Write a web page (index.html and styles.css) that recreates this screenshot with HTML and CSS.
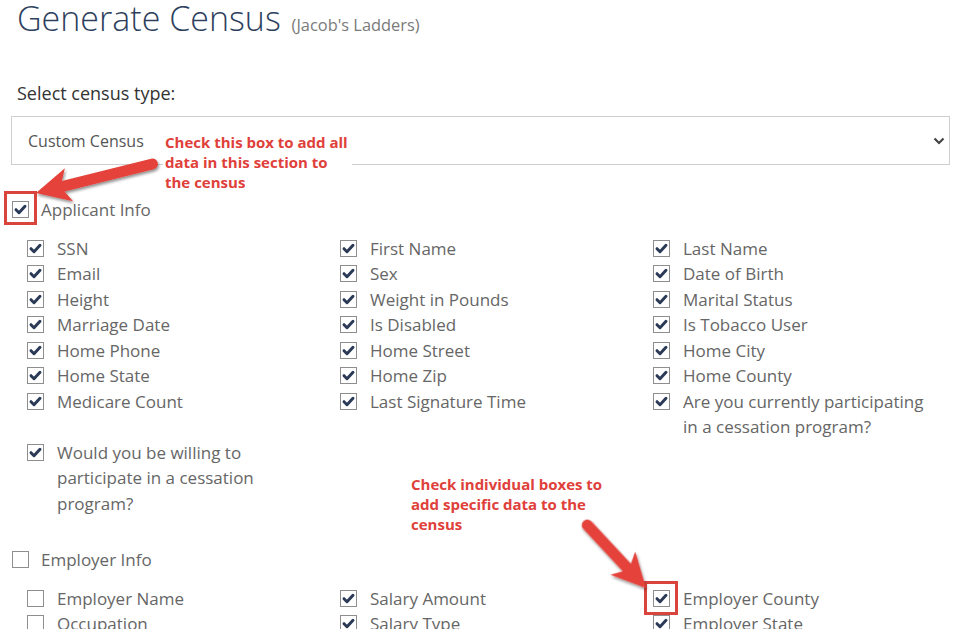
FILE: index.html
```html
<!DOCTYPE html>
<html>
<head>
<meta charset="utf-8">
<link rel="stylesheet" href="styles.css">
</head>
<body>
<div class="page">
  <h1 class="title">Generate Census <small class="subtitle">(Jacob's Ladders)</small></h1>
  <div class="field-label">Select census type:</div>
  <div class="select">
    <span class="select-value">Custom Census</span>
    <svg class="chevron" width="12" height="8" viewBox="0 0 12 8"><path d="M1.5 1.5 L6 6 L10.5 1.5" fill="none" stroke="#444" stroke-width="2.2"/></svg>
  </div>

  <section class="group group-first">
    <label class="section-head"><span class="cb checked"><svg viewBox="0 0 16 16"><path d="M3.2 8.2 L6.4 11.4 L12.8 4.6"/></svg></span>Applicant Info</label>
    <div class="items">
      <label class="item"><span class="cb checked"><svg viewBox="0 0 16 16"><path d="M3.2 8.2 L6.4 11.4 L12.8 4.6"/></svg></span><span class="lbl">SSN</span></label>
      <label class="item"><span class="cb checked"><svg viewBox="0 0 16 16"><path d="M3.2 8.2 L6.4 11.4 L12.8 4.6"/></svg></span><span class="lbl">First Name</span></label>
      <label class="item"><span class="cb checked"><svg viewBox="0 0 16 16"><path d="M3.2 8.2 L6.4 11.4 L12.8 4.6"/></svg></span><span class="lbl">Last Name</span></label>
      <label class="item"><span class="cb checked"><svg viewBox="0 0 16 16"><path d="M3.2 8.2 L6.4 11.4 L12.8 4.6"/></svg></span><span class="lbl">Email</span></label>
      <label class="item"><span class="cb checked"><svg viewBox="0 0 16 16"><path d="M3.2 8.2 L6.4 11.4 L12.8 4.6"/></svg></span><span class="lbl">Sex</span></label>
      <label class="item"><span class="cb checked"><svg viewBox="0 0 16 16"><path d="M3.2 8.2 L6.4 11.4 L12.8 4.6"/></svg></span><span class="lbl">Date of Birth</span></label>
      <label class="item"><span class="cb checked"><svg viewBox="0 0 16 16"><path d="M3.2 8.2 L6.4 11.4 L12.8 4.6"/></svg></span><span class="lbl">Height</span></label>
      <label class="item"><span class="cb checked"><svg viewBox="0 0 16 16"><path d="M3.2 8.2 L6.4 11.4 L12.8 4.6"/></svg></span><span class="lbl">Weight in Pounds</span></label>
      <label class="item"><span class="cb checked"><svg viewBox="0 0 16 16"><path d="M3.2 8.2 L6.4 11.4 L12.8 4.6"/></svg></span><span class="lbl">Marital Status</span></label>
      <label class="item"><span class="cb checked"><svg viewBox="0 0 16 16"><path d="M3.2 8.2 L6.4 11.4 L12.8 4.6"/></svg></span><span class="lbl">Marriage Date</span></label>
      <label class="item"><span class="cb checked"><svg viewBox="0 0 16 16"><path d="M3.2 8.2 L6.4 11.4 L12.8 4.6"/></svg></span><span class="lbl">Is Disabled</span></label>
      <label class="item"><span class="cb checked"><svg viewBox="0 0 16 16"><path d="M3.2 8.2 L6.4 11.4 L12.8 4.6"/></svg></span><span class="lbl">Is Tobacco User</span></label>
      <label class="item"><span class="cb checked"><svg viewBox="0 0 16 16"><path d="M3.2 8.2 L6.4 11.4 L12.8 4.6"/></svg></span><span class="lbl">Home Phone</span></label>
      <label class="item"><span class="cb checked"><svg viewBox="0 0 16 16"><path d="M3.2 8.2 L6.4 11.4 L12.8 4.6"/></svg></span><span class="lbl">Home Street</span></label>
      <label class="item"><span class="cb checked"><svg viewBox="0 0 16 16"><path d="M3.2 8.2 L6.4 11.4 L12.8 4.6"/></svg></span><span class="lbl">Home City</span></label>
      <label class="item"><span class="cb checked"><svg viewBox="0 0 16 16"><path d="M3.2 8.2 L6.4 11.4 L12.8 4.6"/></svg></span><span class="lbl">Home State</span></label>
      <label class="item"><span class="cb checked"><svg viewBox="0 0 16 16"><path d="M3.2 8.2 L6.4 11.4 L12.8 4.6"/></svg></span><span class="lbl">Home Zip</span></label>
      <label class="item"><span class="cb checked"><svg viewBox="0 0 16 16"><path d="M3.2 8.2 L6.4 11.4 L12.8 4.6"/></svg></span><span class="lbl">Home County</span></label>
      <label class="item"><span class="cb checked"><svg viewBox="0 0 16 16"><path d="M3.2 8.2 L6.4 11.4 L12.8 4.6"/></svg></span><span class="lbl">Medicare Count</span></label>
      <label class="item"><span class="cb checked"><svg viewBox="0 0 16 16"><path d="M3.2 8.2 L6.4 11.4 L12.8 4.6"/></svg></span><span class="lbl">Last Signature Time</span></label>
      <label class="item"><span class="cb checked"><svg viewBox="0 0 16 16"><path d="M3.2 8.2 L6.4 11.4 L12.8 4.6"/></svg></span><span class="lbl">Are you currently participating in a cessation program?</span></label>
      <label class="item"><span class="cb checked"><svg viewBox="0 0 16 16"><path d="M3.2 8.2 L6.4 11.4 L12.8 4.6"/></svg></span><span class="lbl">Would you be willing to participate in a cessation program?</span></label>
    </div>
  </section>

  <section class="group group-second">
    <label class="section-head"><span class="cb"></span>Employer Info</label>
    <div class="items">
      <label class="item"><span class="cb"></span><span class="lbl">Employer Name</span></label>
      <label class="item"><span class="cb checked"><svg viewBox="0 0 16 16"><path d="M3.2 8.2 L6.4 11.4 L12.8 4.6"/></svg></span><span class="lbl">Salary Amount</span></label>
      <label class="item"><span class="cb checked"><svg viewBox="0 0 16 16"><path d="M3.2 8.2 L6.4 11.4 L12.8 4.6"/></svg></span><span class="lbl">Employer County</span></label>
      <label class="item"><span class="cb"></span><span class="lbl">Occupation</span></label>
      <label class="item"><span class="cb checked"><svg viewBox="0 0 16 16"><path d="M3.2 8.2 L6.4 11.4 L12.8 4.6"/></svg></span><span class="lbl">Salary Type</span></label>
      <label class="item"><span class="cb checked"><svg viewBox="0 0 16 16"><path d="M3.2 8.2 L6.4 11.4 L12.8 4.6"/></svg></span><span class="lbl">Employer State</span></label>
    </div>
  </section>
</div>

<!-- annotation overlay -->
<div class="note note-1">Check this box to add all<br>data in this section to<br>the census</div>
<div class="note note-2">Check individual boxes to<br>add specific data to the<br>census</div>
<div class="hl hl-1"></div>
<div class="hl hl-2"></div>
<svg class="arrows" width="967" height="629" viewBox="0 0 967 629">
  <defs>
    <filter id="sh" x="-20%" y="-20%" width="140%" height="140%">
      <feDropShadow dx="1" dy="2" stdDeviation="1.6" flood-color="#000" flood-opacity="0.45"/>
    </filter>
  </defs>
  <g filter="url(#sh)" fill="#e5423a">
    <g transform="translate(36 193) rotate(166)">
      <path d="M0 0 L-34 -17 L-28 -5.5 L-120 -5.5 A5.5 5.5 0 0 0 -120 5.5 L-28 5.5 L-34 17 Z"/>
    </g>
    <g transform="translate(646 588) rotate(47)">
      <path d="M0 0 L-34 -17 L-28 -5.5 L-86 -5.5 A5.5 5.5 0 0 0 -86 5.5 L-28 5.5 L-34 17 Z"/>
    </g>
  </g>
</svg>
</body>
</html>
```

FILE: styles.css
```css
html, body {
  margin: 0;
  padding: 0;
  background: #fff;
}

body {
  font-family: "Open Sans", "Noto Sans", sans-serif;
  color: #666;
  position: relative;
  width: 967px;
  height: 629px;
  overflow: hidden;
}

.page {
  padding: 0 17px 0 11px;
}

.title {
  margin: 0;
  padding-left: 6px;
  font-weight: 300;
  font-size: 34px;
  line-height: 36px;
  color: #2e3f5e;
}

.subtitle {
  font-size: 16.4px;
  font-weight: 400;
  color: #7a7a7a;
  margin-left: 2px;
}

.field-label {
  margin-top: 38px;
  padding-left: 6px;
  font-size: 18px;
  line-height: 24px;
  color: #333;
}

.select {
  margin-top: 11px;
  height: 47px;
  border: 1px solid #cfcfcf;
  display: flex;
  align-items: center;
  justify-content: space-between;
  padding: 0 4px 0 16px;
}

.select-value {
  font-size: 16px;
  color: #555;
}

.group-first {
  margin-top: 31px;
}

.group-second {
  margin-top: 30px;
}

.section-head {
  display: flex;
  align-items: center;
  gap: 12px;
  height: 26px;
  font-size: 17px;
  color: #666;
  padding-left: 1px;
}

.items {
  margin-top: 13.5px;
  padding-left: 16px;
  display: grid;
  grid-template-columns: repeat(3, 313px);
}

.item {
  display: flex;
  align-items: flex-start;
  gap: 13px;
  padding-right: 34px;
  font-size: 17px;
  line-height: 25.5px;
  color: #666;
}

.item .cb {
  margin-top: 4px;
}

.cb {
  flex: none;
  width: 15px;
  height: 15px;
  border: 1px solid #8e8e8e;
  background: #fff;
  display: block;
}

.cb svg {
  display: block;
  width: 15px;
  height: 15px;
}

.cb svg path {
  fill: none;
  stroke: #2b3a57;
  stroke-width: 3.2;
  stroke-linecap: round;
  stroke-linejoin: round;
}

/* annotations */
.note {
  position: absolute;
  background: #fff;
  font-family: "Open Sans", sans-serif;
  font-weight: 700;
  font-size: 15px;
  line-height: 20px;
  color: #e0403a;
  padding: 0 4px 0 2px;
}

.note-1 {
  left: 163px;
  top: 132px;
}

.note-2 {
  left: 409px;
  top: 474px;
}

.hl {
  position: absolute;
  border: 3px solid #d9443c;
  box-sizing: border-box;
}

.hl-1 {
  left: 4px;
  top: 191px;
  width: 33px;
  height: 34px;
}

.hl-2 {
  left: 644px;
  top: 581px;
  width: 34px;
  height: 34px;
}

.arrows {
  position: absolute;
  left: 0;
  top: 0;
  pointer-events: none;
}
```
